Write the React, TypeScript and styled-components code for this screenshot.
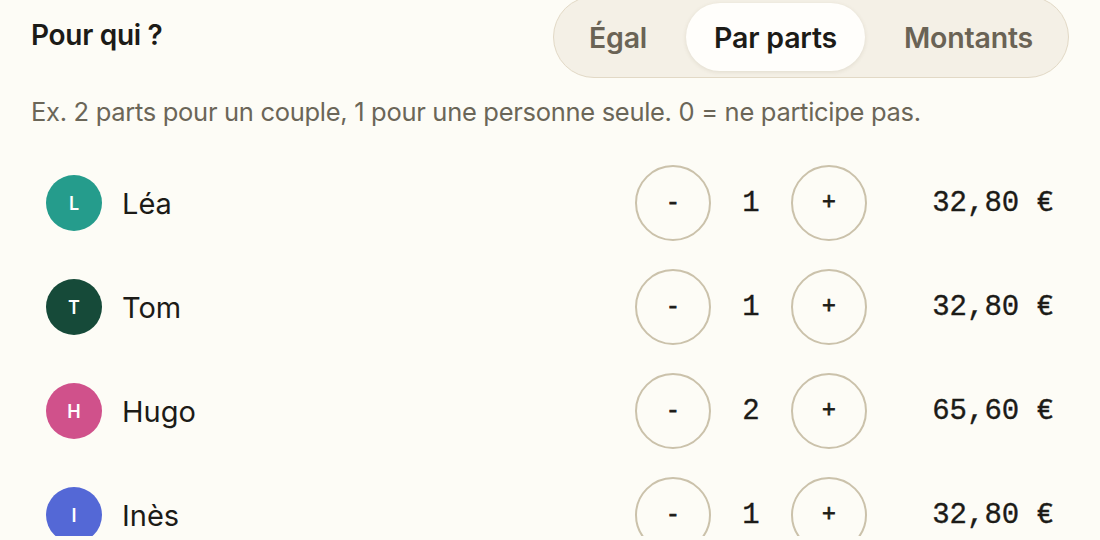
import styled, { createGlobalStyle } from "styled-components";

const GlobalStyle = createGlobalStyle`
  html, body {
    margin: 0;
    padding: 0;
    background: #fdfcf6;
    overflow: hidden;
  }
  * { box-sizing: border-box; }
`;

type Person = {
    name: string;
    color: string;
    parts: number;
    amount: string;
};

const people: Person[] = [
    { name: "Léa", color: "#259c8c", parts: 1, amount: "32,80 €" },
    { name: "Tom", color: "#164a39", parts: 1, amount: "32,80 €" },
    { name: "Hugo", color: "#d0518b", parts: 2, amount: "65,60 €" },
    { name: "Inès", color: "#5468d6", parts: 1, amount: "32,80 €" },
];

const tabs = ["Égal", "Par parts", "Montants"];

const Style = {
    Page: styled.div`
        width: 1100px;
        height: 540px;
        padding: 0 31px;
        font-family: Inter, "Noto Sans", sans-serif;
        color: #1c1b17;
    `,
    Header: styled.div`
        display: flex;
        justify-content: space-between;
        align-items: center;
        margin-top: -4px;
    `,
    Title: styled.h2`
        margin: 0 0 4px;
        font-size: 28px;
        font-weight: 600;
        letter-spacing: -0.3px;
        color: #1c1b17;
    `,
    Segmented: styled.div`
        display: flex;
        gap: 11px;
        padding: 6px 7px;
        background: #f4f0e6;
        border: 1.5px solid #e2d9c6;
        border-radius: 999px;
    `,
    Tab: styled.button<{ $active: boolean }>`
        height: 68px;
        padding: 0 28px;
        border: none;
        border-radius: 999px;
        font-family: Inter, "Noto Sans", sans-serif;
        font-size: 28.5px;
        font-weight: 600;
        letter-spacing: -0.2px;
        cursor: pointer;
        background: ${({ $active }) => ($active ? "#fffefb" : "transparent")};
        color: ${({ $active }) => ($active ? "#1c1b17" : "#6a6355")};
        box-shadow: ${({ $active }) => ($active ? "0 1px 4px rgba(90, 70, 30, 0.12)" : "none")};
    `,
    Hint: styled.p`
        margin: 18px 0 0;
        font-size: 25.5px;
        font-weight: 400;
        letter-spacing: -0.3px;
        color: #6b6658;
    `,
    List: styled.div`
        display: flex;
        flex-direction: column;
        margin-top: 24px;
    `,
    Row: styled.div`
        display: flex;
        align-items: center;
        height: 104px;
        padding: 0 15px;
    `,
    Avatar: styled.div<{ $color: string }>`
        width: 56px;
        height: 56px;
        border-radius: 50%;
        background: ${({ $color }) => $color};
        color: #ffffff;
        display: flex;
        align-items: center;
        justify-content: center;
        font-size: 18px;
        font-weight: 600;
        flex-shrink: 0;
    `,
    Name: styled.span`
        margin-left: 20px;
        flex: 1;
        font-size: 29px;
        font-weight: 400;
        color: #1c1b17;
    `,
    Stepper: styled.div`
        display: flex;
        align-items: center;
    `,
    StepButton: styled.button`
        width: 76px;
        height: 76px;
        border-radius: 50%;
        border: 2px solid #cbc2ab;
        background: transparent;
        display: flex;
        align-items: center;
        justify-content: center;
        font-family: "Liberation Mono", monospace;
        font-size: 23px;
        font-weight: 400;
        -webkit-text-stroke: 0.8px #1c1b17;
        color: #1c1b17;
        cursor: pointer;
        padding: 0;
    `,
    Count: styled.span`
        width: 80px;
        text-align: center;
        font-family: "Liberation Mono", monospace;
        font-size: 29px;
        font-weight: 400;
        -webkit-text-stroke: 0.35px #1c1b17;
    `,
    Amount: styled.span`
        width: 187px;
        text-align: right;
        font-family: "Liberation Mono", monospace;
        font-size: 29px;
        font-weight: 400;
        -webkit-text-stroke: 0.35px #1c1b17;
        color: #1c1b17;
    `,
};

export default function App() {
    const active = "Par parts";
    return (
        <>
            <GlobalStyle />
            <Style.Page>
                {/* en-tête */}
                <Style.Header>
                    <Style.Title>Pour qui ?</Style.Title>
                    <Style.Segmented>
                        {tabs.map((t) => (
                            <Style.Tab key={t} $active={t === active}>
                                {t}
                            </Style.Tab>
                        ))}
                    </Style.Segmented>
                </Style.Header>

                <Style.Hint>Ex. 2 parts pour un couple, 1 pour une personne seule. 0 = ne participe pas.</Style.Hint>

                {/* participants */}
                <Style.List>
                    {people.map((p) => (
                        <Style.Row key={p.name}>
                            <Style.Avatar $color={p.color}>{p.name[0]}</Style.Avatar>
                            <Style.Name>{p.name}</Style.Name>
                            <Style.Stepper>
                                <Style.StepButton>-</Style.StepButton>
                                <Style.Count>{p.parts}</Style.Count>
                                <Style.StepButton>+</Style.StepButton>
                            </Style.Stepper>
                            <Style.Amount>{p.amount}</Style.Amount>
                        </Style.Row>
                    ))}
                </Style.List>
            </Style.Page>
        </>
    );
}
